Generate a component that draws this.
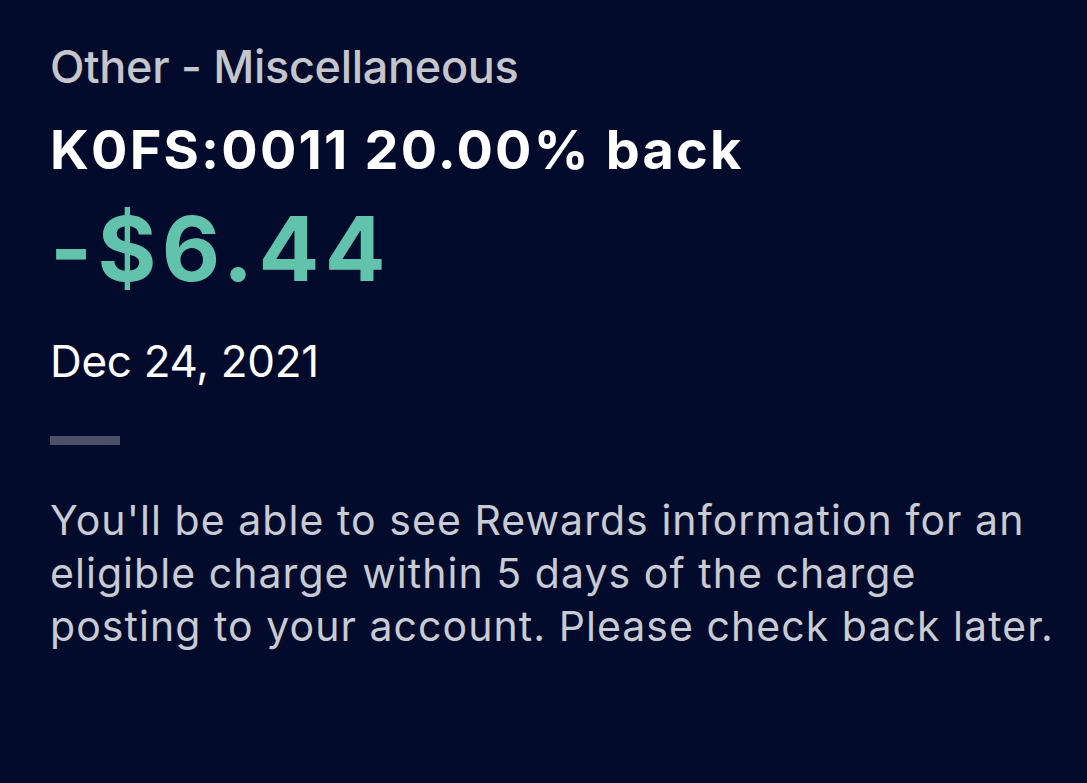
export default function App() {
  return (
    <div
      className="min-h-[783px] w-full bg-[#020b2b] px-[50px] pt-[40px] text-white"
      style={{ fontFamily: 'Inter, "Noto Sans", sans-serif' }}
    >
      <p className="text-[45px] leading-[54px] font-medium tracking-[-0.3px] text-[#c4c6cc]">Other - Miscellaneous</p>
      <h1 className="mt-[24px] text-[54px] leading-[64px] font-bold tracking-[2.2px]">K0FS:0011 20.00% back</h1>
      <p className="mt-[17px] text-[90px] leading-[100px] font-bold tracking-[5.4px] text-[#62c3ad]">-$6.44</p>
      <p className="mt-[36px] text-[44px] leading-[52px] tracking-[-0.3px]">Dec 24, 2021</p>
      <div className="mt-[49px] h-[9px] w-[70px] bg-[#4a5168]" />
      <p className="mt-[49px] w-[1016px] text-[41px] leading-[53px] tracking-[1.05px] text-[#c8cbd3]">
        You'll be able to see Rewards information for an eligible charge within 5 days of the charge posting to your account. Please check back later.
      </p>
    </div>
  )
}
